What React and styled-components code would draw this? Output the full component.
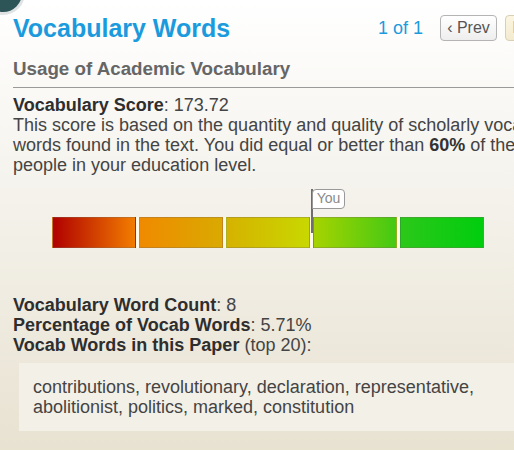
import React from "react";
import styled, { createGlobalStyle } from "styled-components";

const GlobalStyle = createGlobalStyle`
    html, body {
        margin: 0;
        padding: 0;
        height: 100%;
        overflow: hidden;
    }
    body {
        font-family: "Liberation Sans", Arial, sans-serif;
        background: linear-gradient(180deg, #ffffff 0%, #f5f3ed 40%, #e8e2d1 100%);
        color: #444;
    }
    #root {
        min-height: 450px;
    }
`;

const Page = styled.div`
    position: relative;
    min-height: 450px;
`;

// round button peeking in at the top-left corner
const HomeDot = styled.div`
    position: absolute;
    left: -19px;
    top: -29px;
    width: 38px;
    height: 38px;
    border-radius: 50%;
    background: #2d5456;
    border: 3px solid #dfe3e3;
`;

const Content = styled.main`
    width: 560px;
    padding: 13px 0 0 13px;
`;

const Header = styled.header`
    display: flex;
    align-items: center;
    height: 30px;
    padding-right: 11px;
`;

const Title = styled.h1`
    flex: 1;
    margin: 0;
    font-size: 25px;
    line-height: 30px;
    font-weight: bold;
    color: #1b9bdd;
`;

const PageCount = styled.span`
    font-size: 18px;
    color: #1b9bdd;
    margin-right: 17px;
`;

const PagerButton = styled.button`
    height: 26px;
    width: 57px;
    padding: 0;
    margin-left: ${(p) => (p.$first ? "0" : "8px")};
    font-family: inherit;
    font-size: 16px;
    color: ${(p) => (p.$disabled ? "#b8ae90" : "#555")};
    border: 1px solid ${(p) => (p.$disabled ? "#d8d0b4" : "#b4b4b4")};
    border-radius: 4px;
    background: ${(p) =>
        p.$disabled
            ? "linear-gradient(#fbf6e2, #f3ebcf)"
            : "linear-gradient(#ffffff, #eeeeee)"};
    white-space: nowrap;
`;

const Subtitle = styled.h2`
    margin: 15px 0 0;
    font-size: 18.75px;
    line-height: 22px;
    font-weight: bold;
    color: #666;
`;

const Rule = styled.hr`
    margin: 7px 0 0;
    width: 600px;
    border: none;
    border-top: 1px solid #9a9a9a;
`;

const Block = styled.div`
    margin-top: ${(p) => p.$top || "0"};
    font-size: 18px;
    line-height: 20px;
    color: #444;
`;

const Label = styled.b`
    color: #2e2e2e;
`;

const Strong = styled.b`
    color: #333;
`;

const BarArea = styled.div`
    margin: 42px 0 0 39px;
    position: relative;
    width: 432px;
`;

const Bar = styled.div`
    display: flex;
    gap: 3px;
    height: 31px;
    background: #fff9ea;
`;

const Segment = styled.div`
    flex: 1;
    box-sizing: border-box;
    border: 1px solid rgba(120, 110, 90, 0.35);
    background: linear-gradient(90deg, ${(p) => p.$from}, ${(p) => p.$to});
`;

const Marker = styled.div`
    position: absolute;
    top: -28px;
    display: flex;
    align-items: flex-start;
`;

const Pole = styled.div`
    width: 1.5px;
    height: 44px;
    background: #6e6e6e;
`;

const Bubble = styled.div`
    height: 20px;
    box-sizing: border-box;
    padding: 0 4px;
    margin-left: -1px;
    border: 1.5px solid #999;
    border-radius: 4px 4px 4px 0;
    background: #fff;
    color: #8a8a8a;
    font-size: 14px;
    line-height: 17px;
`;

const WordBox = styled.div`
    margin: 8px 0 0 6px;
    padding: 14px;
    background: #f3f0e7;
    font-size: 18px;
    line-height: 20px;
    color: #444;
`;

const segments = [
    ["#b00000", "#f27d00"],
    ["#f08a00", "#d9aa00"],
    ["#d6b200", "#c8d800"],
    ["#a6d300", "#44c914"],
    ["#2cc81a", "#00cd0e"],
];

const words = [
    "contributions",
    "revolutionary",
    "declaration",
    "representative",
    "abolitionist",
    "politics",
    "marked",
    "constitution",
];

const App = () => {
    const percentile = 60;

    return (
        <Page>
            <GlobalStyle />
            <HomeDot />
            <Content>
                <Header>
                    <Title>Vocabulary Words</Title>
                    <PageCount>1 of 1</PageCount>
                    <PagerButton $first>‹ Prev</PagerButton>
                    <PagerButton $disabled>Next ›</PagerButton>
                </Header>
                <Subtitle>Usage of Academic Vocabulary</Subtitle>
                <Rule />
                <Block $top="7px">
                    <Label>Vocabulary Score</Label>: 173.72
                    <br />
                    This score is based on the quantity and quality of
                    scholarly vocabulary words found in the text. You did equal
                    or better than <Strong>{percentile}%</Strong> of the people
                    in your education level.
                </Block>
                <BarArea>
                    <Bar>
                        {segments.map(([from, to], i) => (
                            <Segment key={i} $from={from} $to={to} />
                        ))}
                    </Bar>
                    <Marker style={{ left: `${percentile}%` }}>
                        <Pole />
                        <Bubble>You</Bubble>
                    </Marker>
                </BarArea>
                <Block $top="47px">
                    <Label>Vocabulary Word Count</Label>: 8
                    <br />
                    <Label>Percentage of Vocab Words</Label>: 5.71%
                    <br />
                    <Label>Vocab Words in this Paper</Label> (top 20):
                </Block>
                <WordBox>{words.join(", ")}</WordBox>
            </Content>
        </Page>
    );
};

export default App;
